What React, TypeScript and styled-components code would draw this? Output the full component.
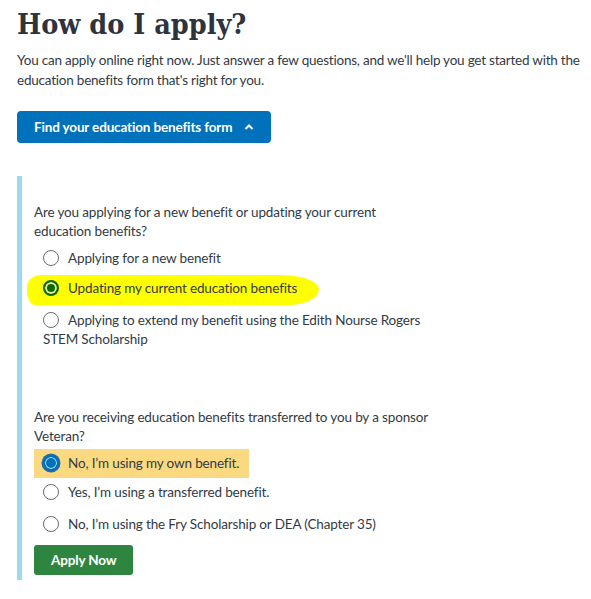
import React from "react";
import styled, { createGlobalStyle } from "styled-components";

const Global = createGlobalStyle`
  html, body { margin: 0; padding: 0; background: #fff; }
  body {
    font-family: "Lato", "Noto Sans", sans-serif;
    color: #323a45;
    font-size: 13.5px;
    letter-spacing: -0.15px;
  }
`;

const Page = styled.div`
  padding: 6px 0 0 17px;
  width: 591px;
  box-sizing: border-box;
`;

const Title = styled.h1`
  font-family: "DejaVu Serif Condensed", "DejaVu Serif", serif;
  font-weight: 700;
  font-size: 28.5px;
  line-height: 36px;
  letter-spacing: 0;
  margin: 0;
  color: #2e343d;
`;

const Intro = styled.p`
  margin: 8px 0 0;
  line-height: 20px;
  width: 572px;
  letter-spacing: -0.22px;
`;

const ToggleButton = styled.button`
  margin-top: 21px;
  display: inline-flex;
  align-items: center;
  gap: 12px;
  height: 32px;
  padding: 0 17px;
  border: 0;
  border-radius: 4px;
  background: #0071bb;
  color: #fff;
  font-family: inherit;
  font-weight: 700;
  font-size: 13.5px;
  letter-spacing: -0.15px;
`;

const Panel = styled.div`
  margin-top: 33px;
  border-left: 5px solid #9bdaf1;
  padding: 27px 0 5px 12px;
  display: flex;
  flex-direction: column;
`;

const Question = styled.fieldset`
  border: 0;
  margin: 0;
  padding: 0;
  width: 395px;
  & + & { margin-top: 53px; }
`;

const Legend = styled.legend`
  padding: 0;
  margin-bottom: 3px;
  line-height: 19px;
`;

const Option = styled.label<{ $mark?: "yellow" | "focus" }>`
  position: relative;
  display: ${(p) => (p.$mark === "focus" ? "table" : "block")};
  line-height: 19px;
  padding: ${(p) => (p.$mark === "focus" ? "5px 10px 5px 9px" : "5px 0 6px 9px")};
  background: ${(p) => (p.$mark === "focus" ? "#fad980" : "transparent")};
  white-space: ${(p) => (p.$mark === "focus" ? "nowrap" : "normal")};
  z-index: 0;
  &:nth-of-type(3) { margin-top: 2px; }
`;

const Highlight = styled.span`
  position: absolute;
  left: -7px;
  top: 1px;
  width: 292px;
  height: 30px;
  background: #ffff00;
  border-radius: 14px 40px 30px 8px / 12px 14px 16px 14px;
  z-index: -1;
`;

const Radio = styled.span<{ $state?: "none" | "green" | "blue" }>`
  display: inline-block;
  box-sizing: border-box;
  width: 16px;
  height: 16px;
  border-radius: 50%;
  vertical-align: -3px;
  margin-right: 9px;
  border: ${(p) =>
    p.$state === "green"
      ? "2px solid #0a6a0a"
      : p.$state === "blue"
      ? "2px solid #0071bb"
      : "1px solid #6d6d6d"};
  background: ${(p) =>
    p.$state === "green" ? "#0a6a0a" : p.$state === "blue" ? "#0071bb" : "#fff"};
  box-shadow: ${(p) =>
    p.$state === "green"
      ? "inset 0 0 0 2px #f2f0a0"
      : p.$state === "blue"
      ? "inset 0 0 0 1px #cfe3f3, 0 0 0 1.5px #2b6aa0"
      : "none"};
`;

const ApplyButton = styled.button`
  margin-top: 5px;
  align-self: flex-start;
  height: 30px;
  padding: 0 17px;
  border: 0;
  border-radius: 3px;
  background: #2e8540;
  color: #fff;
  font-family: inherit;
  font-weight: 700;
  font-size: 13.5px;
  letter-spacing: -0.15px;
`;

const Chevron = () => (
  <svg width="10" height="8" viewBox="0 0 10 8" aria-hidden>
    <path d="M1.5 6 L5 2.5 L8.5 6" fill="none" stroke="#fff" strokeWidth="2" />
  </svg>
);

export default function App() {
  return (
    <Page>
      <Global />
      <Title>How do I apply?</Title>
      <Intro>
        You can apply online right now. Just answer a few questions, and we'll help you get started with the
        education benefits form that's right for you.
      </Intro>
      <ToggleButton>
        Find your education benefits form <Chevron />
      </ToggleButton>
      <Panel>
        <Question>
          <Legend>Are you applying for a new benefit or updating your current education benefits?</Legend>
          <Option>
            <Radio />Applying for a new benefit
          </Option>
          <Option $mark="yellow">
            <Highlight />
            <Radio $state="green" />Updating my current education benefits
          </Option>
          <Option>
            <Radio />Applying to extend my benefit using the Edith Nourse Rogers STEM Scholarship
          </Option>
        </Question>
        <Question>
          <Legend>Are you receiving education benefits transferred to you by a sponsor Veteran?</Legend>
          <Option $mark="focus">
            <Radio $state="blue" />No, I’m using my own benefit.
          </Option>
          <Option>
            <Radio />Yes, I’m using a transferred benefit.
          </Option>
          <Option>
            <Radio />No, I’m using the Fry Scholarship or DEA (Chapter 35)
          </Option>
        </Question>
        <ApplyButton>Apply Now</ApplyButton>
      </Panel>
    </Page>
  );
}
